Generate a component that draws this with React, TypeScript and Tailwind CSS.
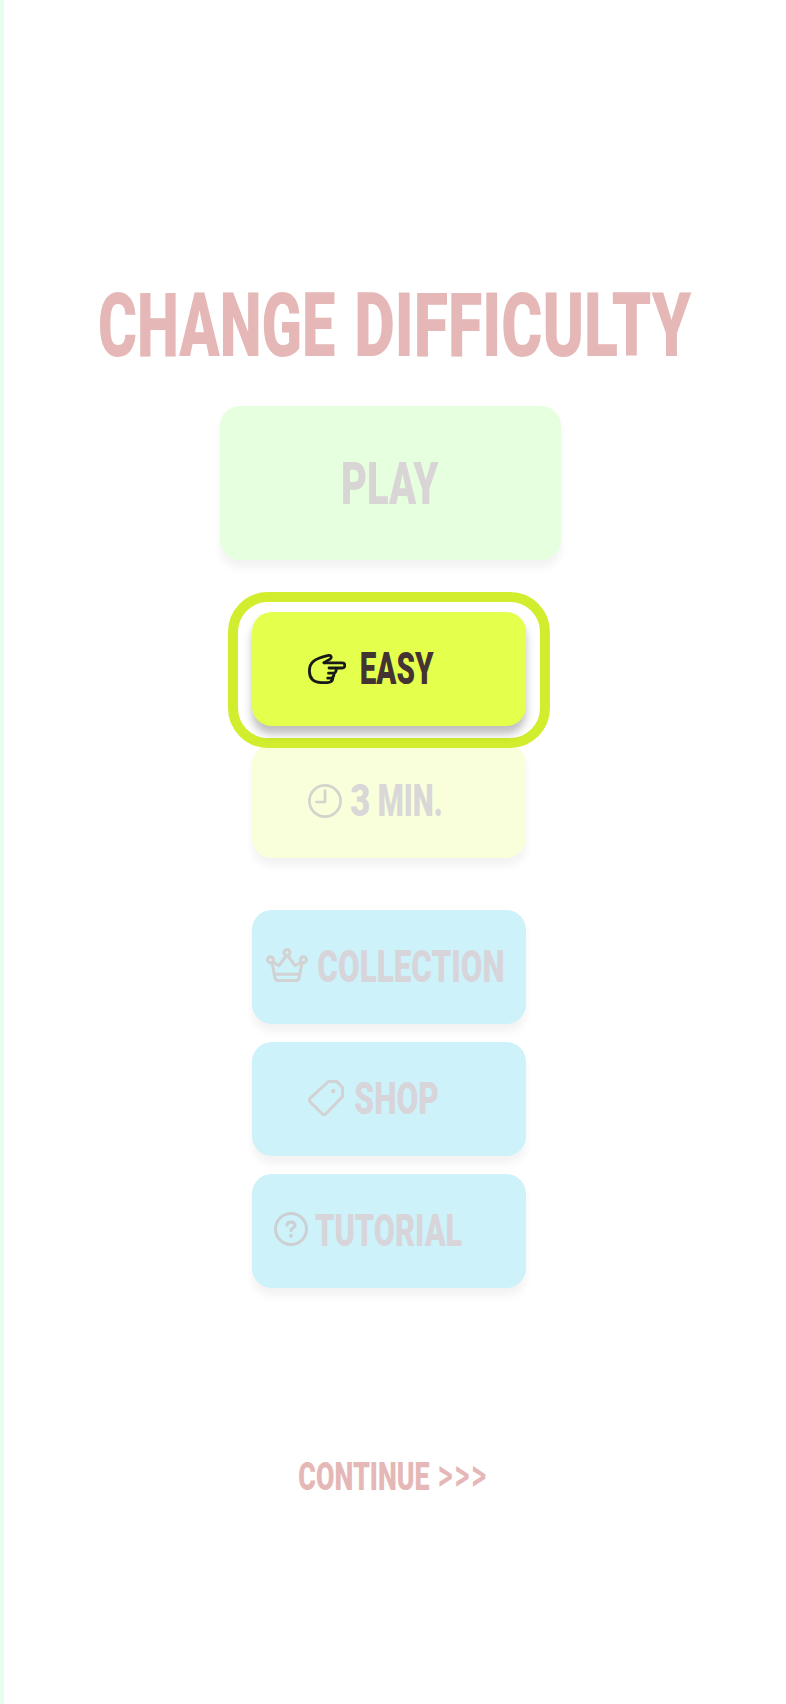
import { useLayoutEffect, useRef, type ReactNode } from "react";

/** A word condensed horizontally so that its glyphs span the given width. */
function Word({ text, width, className = "" }: { text: string; width: number; className?: string }) {
  const ref = useRef<HTMLSpanElement>(null);

  useLayoutEffect(() => {
    const el = ref.current;
    const ctx = document.createElement("canvas").getContext("2d");
    if (!el || !ctx) return;
    const style = getComputedStyle(el);
    ctx.font = `${style.fontWeight} ${style.fontSize} ${style.fontFamily}`;
    const m = ctx.measureText(text);
    const scale = width / (m.actualBoundingBoxLeft + m.actualBoundingBoxRight);
    el.style.transform = `translateX(${m.actualBoundingBoxLeft * scale}px) scaleX(${scale})`;
  }, [text, width]);

  return (
    <span className={`block shrink-0 ${className}`} style={{ width }}>
      <span ref={ref} className="block w-max origin-left whitespace-nowrap leading-none">
        {text}
      </span>
    </span>
  );
}

function MenuButton({ className, children }: { className: string; children: ReactNode }) {
  return (
    <button
      className={`flex h-[114px] w-[274px] shrink-0 items-center rounded-[20px] text-[45px] font-black ${className}`}
    >
      {children}
    </button>
  );
}

const HandIcon = () => (
  <svg className="h-[30px] w-[38px] shrink-0" viewBox="0 0 38 30" fill="none" stroke="#161a1a" strokeWidth="2.8" strokeLinecap="round" strokeLinejoin="round">
    <path d="M16 8.8H34.200a2.400 2.400 0 0 1 0 5.200H21" />
    <path d="M16 8.800l6-3.700c2.200-1.500 1.100-4.200-1.500-3.700C14 3 9.500 4.300 6 6.800 2.800 9.200 1.400 12.800 1.400 17c0 7.500 4.500 11.400 12 11.600h6c3 0 4.800-1 5.400-4" />
    <path d="M28.300 14.300c.2 2.300-.6 4-2.300 4.900.2 2.200-.5 3.600-1.700 4.300.3 1.400 0 2.600-.8 3.400M20.500 19.200H26M19.700 24.200h4.800" />
  </svg>
);

const ClockIcon = () => (
  <svg className="h-[34px] w-[34px] shrink-0" viewBox="0 0 34 34" fill="none" stroke="#d3d4cb" strokeWidth="2.7" strokeLinecap="round" strokeLinejoin="round">
    <circle cx="17" cy="17" r="15.600" />
    <path d="M17 6.500V18H8.500" />
  </svg>
);

const CrownIcon = () => (
  <svg className="mb-1 h-[34px] w-[42px] shrink-0" viewBox="0 0 42 34" fill="none" stroke="#d2d2d2" strokeWidth="3" strokeLinecap="round" strokeLinejoin="round">
    <circle cx="21" cy="4.500" r="3" />
    <circle cx="4.500" cy="11.800" r="3" />
    <circle cx="37.500" cy="11.800" r="3" />
    <path d="M6 15l3 14.700c.3 1.800 1 2.700 2.800 2.700h18.400c1.800 0 2.500-.9 2.800-2.700l3-14.700M7.500 14.500l5.500 3.200L20 8M22 8l7 9.700 5.500-3.200M8.600 26.300h24.800" />
  </svg>
);

const TagIcon = () => (
  <svg className="mb-0.5 h-[36px] w-[36px] shrink-0" viewBox="0 0 36 36" fill="none" stroke="#d2d2d2" strokeWidth="3" strokeLinejoin="round">
    <path d="M20.500 1.500h8.300l5.700 6.300v8.700L18.200 33.500q-2.100 2-4.200 0L2.300 22.200q-1.700-2 0-4z" />
    <circle cx="25.300" cy="11" r="2.200" fill="#d2d2d2" stroke="none" />
  </svg>
);

const HelpIcon = () => (
  <svg className="mb-1 h-[34px] w-[34px] shrink-0" viewBox="0 0 34 34" fill="none" stroke="#ccd0d2" strokeWidth="3" strokeLinecap="round" strokeLinejoin="round">
    <circle cx="17" cy="17" r="15.500" />
    <path d="M13 13.200c.2-2 1.800-3.100 4.200-3.100 2.500 0 4 1.400 3.900 3.300-.2 2.600-4.100 2.700-4.200 5.200" />
    <circle cx="17" cy="23.700" r="2" fill="#ccd0d2" stroke="none" />
  </svg>
);

const fadedShadow = "shadow-[0_8px_8px_rgba(0,0,0,0.05)]";

export default function App() {
  return (
    <main className="flex h-[1704px] w-[786px] flex-col items-start overflow-hidden border-l-4 border-[#e6ffed] bg-white font-['Roboto',sans-serif]">
      <h1 className="mt-[282px] ml-24 flex gap-[22px] text-[88.500px] font-black text-[#e5b8b7]">
        <Word text="CHANGE" width={235} />
        <Word text="DIFFICULTY" width={334.500} />
      </h1>

      <button className={`mt-[35px] ml-[216px] flex h-[154px] w-[341px] shrink-0 items-center justify-center rounded-[20px] bg-[#e6ffde] pt-1 pl-px text-[58.500px] font-black text-[#d9d5d6] ${fadedShadow}`}>
        <Word text="PLAY" width={95.500} />
      </button>

      <div className="z-10 mt-8 ml-56 flex h-[156px] w-[322px] shrink-0 rounded-[40px] border-10 border-[#d1ed2d] bg-white pt-[10px] pl-[14px]">
        <MenuButton className="bg-[#e5ff4d] pl-14 text-[#443333] shadow-[0_8px_8px_rgba(0,0,0,0.25)]">
          <HandIcon />
          <Word text="EASY" width={73} className="ml-[15px]" />
        </MenuButton>
      </div>

      <div className="-mt-1 ml-[248px] flex flex-col">
        <MenuButton className={`gap-[9px] bg-[#f9ffdb] pl-14 text-[#d9d7d8] ${fadedShadow}`}>
          <ClockIcon />
          <Word text="3" width={18.500} />
          <Word text="MIN." width={62} />
        </MenuButton>

        <nav className="mt-[52px] flex flex-col gap-[18px]">
          <MenuButton className={`gap-[10px] bg-[#cdf2fa] pl-3.5 text-[#d7d5da] ${fadedShadow}`}>
            <CrownIcon />
            <Word text="COLLECTION" width={185.500} />
          </MenuButton>
          <MenuButton className={`gap-[11px] bg-[#cdf2fa] pl-14 text-[#d7d5da] ${fadedShadow}`}>
            <TagIcon />
            <Word text="SHOP" width={83} />
          </MenuButton>
          <MenuButton className={`gap-[7px] bg-[#cdf2fa] pl-[22px] text-[#d7d5da] ${fadedShadow}`}>
            <HelpIcon />
            <Word text="TUTORIAL" width={147} />
          </MenuButton>
        </nav>
      </div>

      <button className="mt-[169px] ml-[295px] flex gap-[9.500px] text-[39.500px] font-black text-[#e5b8b7]">
        <Word text="CONTINUE" width={130.500} />
        <Word text=">>>" width={47} className="-mt-0.5 font-['Inter',sans-serif] text-[37px] font-bold" />
      </button>
    </main>
  );
}
